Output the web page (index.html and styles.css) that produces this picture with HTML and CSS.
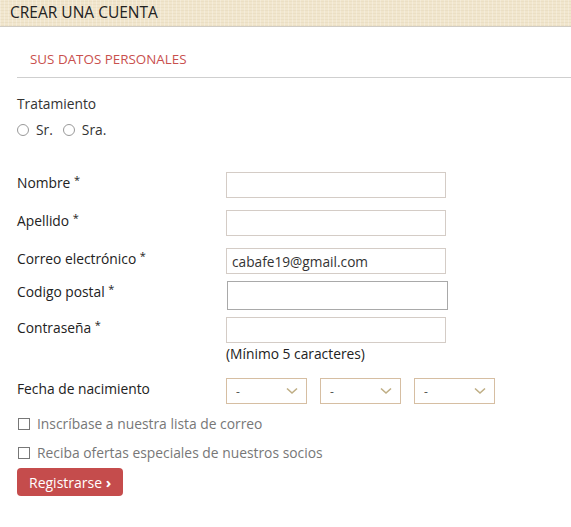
FILE: index.html
```html
<!DOCTYPE html>
<html>

<head>
    <title>Crear una cuenta</title>
    <link rel="stylesheet" href="styles.css">
</head>

<body>
    <div class="page-head">CREAR UNA CUENTA</div>

    <form class="account-form">
        <h3 class="section-title">SUS DATOS PERSONALES</h3>

        <div class="gender">
            <div class="gender-label">Tratamiento</div>
            <div class="gender-options">
                <label><input type="radio" name="gender" class="radio" />Sr.</label>
                <label><input type="radio" name="gender" class="radio" />Sra.</label>
            </div>
        </div>

        <div class="row">
            <label class="row-label">Nombre <sup>*</sup></label>
            <input class="text-input" />
        </div>
        <div class="row">
            <label class="row-label">Apellido <sup>*</sup></label>
            <input class="text-input" />
        </div>
        <div class="row">
            <label class="row-label">Correo electrónico <sup>*</sup></label>
            <input class="text-input" value="cabafe19@gmail.com" />
        </div>
        <div class="row row-postal">
            <label class="row-label">Codigo postal <sup>*</sup></label>
            <input class="text-input postal" />
        </div>
        <div class="row row-pass">
            <label class="row-label">Contraseña <sup>*</sup></label>
            <div>
                <input class="text-input" type="password" />
                <div class="hint">(Mínimo 5 caracteres)</div>
            </div>
        </div>

        <div class="row row-date">
            <label class="row-label">Fecha de nacimiento</label>
            <div class="selects">
                <div class="select"><span>-</span><svg width="12" height="8" viewBox="0 0 12 8"><path d="M1 1.5 6 6 11 1.5" fill="none" stroke="#bfae85" stroke-width="1.6"/></svg></div>
                <div class="select"><span>-</span><svg width="12" height="8" viewBox="0 0 12 8"><path d="M1 1.5 6 6 11 1.5" fill="none" stroke="#bfae85" stroke-width="1.6"/></svg></div>
                <div class="select"><span>-</span><svg width="12" height="8" viewBox="0 0 12 8"><path d="M1 1.5 6 6 11 1.5" fill="none" stroke="#bfae85" stroke-width="1.6"/></svg></div>
            </div>
        </div>

        <label class="check"><input type="checkbox" class="checkbox" />Inscríbase a nuestra lista de correo</label>
        <label class="check"><input type="checkbox" class="checkbox" />Reciba ofertas especiales de nuestros socios</label>

        <button type="button" class="submit-btn">Registrarse <span class="arrow">›</span></button>
    </form>
</body>

</html>
```

FILE: styles.css
```css
body {
    margin: 0;
    font-family: "Open Sans", "Liberation Sans", sans-serif;
    font-size: 13.8px;
    color: #333;
    background: #fff;
}

.page-head {
    height: 26px;
    line-height: 24px;
    padding-left: 10px;
    font-size: 15.5px;
    color: #222;
    border-bottom: 1px solid #d0ccc4;
    background-color: #f1e6cd;
    background-image:
        repeating-linear-gradient(90deg, rgba(255, 255, 255, 0.25) 0 1px, transparent 1px 4px),
        repeating-linear-gradient(0deg, rgba(190, 170, 130, 0.12) 0 1px, transparent 1px 3px);
}

.account-form {
    padding-left: 17px;
}

.section-title {
    margin: 0;
    padding: 22px 0 0 13px;
    height: 28px;
    font-size: 13.4px;
    font-weight: normal;
    color: #c9504e;
    border-bottom: 1px solid #cfcfcf;
    line-height: 20px;
}

.gender {
    padding-top: 17px;
}

.gender-label {
    line-height: 18px;
}

.gender-options {
    display: flex;
    gap: 10px;
    margin-top: 8px;
    line-height: 18px;
}

.gender-options label {
    display: flex;
    align-items: center;
}

.radio {
    appearance: none;
    width: 12px;
    height: 12px;
    margin: 0 7px 0 0;
    border: 1px solid #999;
    border-radius: 50%;
    background: #fff;
}

.row {
    display: flex;
    margin-top: 12px;
}

.gender + .row {
    margin-top: 33px;
}

.row-label {
    width: 209px;
    padding-top: 2px;
    line-height: 18px;
    color: #222;
}

.row-label sup {
    font-size: 11px;
    vertical-align: 4px;
    line-height: 0;
}

.text-input {
    box-sizing: border-box;
    width: 220px;
    height: 26px;
    margin: 0;
    padding: 0 5px;
    border: 1px solid #d4ccc6;
    font-family: inherit;
    font-size: 13.7px;
    color: #333;
    outline: none;
}

.row-postal {
    margin-top: 7px;
}

.postal {
    width: 221px;
    height: 29px;
    margin-left: 1px;
    border-color: #a9a9a9;
}

.row-pass {
    margin-top: 7px;
}

.hint {
    margin-top: 2px;
    line-height: 18px;
    color: #222;
}

.row-date {
    margin-top: 15px;
}

.row-date .row-label {
    padding-top: 2px;
}

.selects {
    display: flex;
    gap: 13px;
}

.select {
    box-sizing: border-box;
    width: 81px;
    height: 26px;
    display: flex;
    align-items: center;
    justify-content: space-between;
    padding: 0 8px 0 9px;
    border: 1px solid #d6bea2;
    font-size: 12px;
    color: #555;
}

.check {
    display: flex;
    align-items: center;
    margin-top: 8px;
    line-height: 21px;
    font-size: 13.85px;
    color: #777;
}

.row-date + .check {
    margin-top: 9px;
}

.checkbox {
    appearance: none;
    width: 12px;
    height: 12px;
    margin: 0 7px 0 1px;
    border: 1px solid #777;
    background: #fff;
}

.submit-btn {
    margin-top: 5px;
    height: 28px;
    padding: 0 12px;
    border: none;
    border-radius: 4px;
    background: #c54c4c;
    color: #fff;
    font-family: inherit;
    font-size: 14px;
}

.arrow {
    font-weight: bold;
    font-size: 15px;
}
```
